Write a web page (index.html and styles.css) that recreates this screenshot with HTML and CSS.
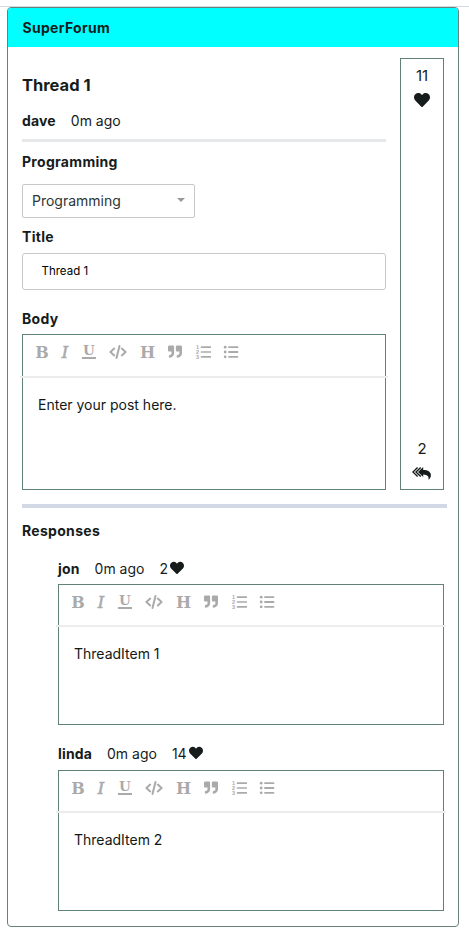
FILE: index.html
```html
<!DOCTYPE html>
<html lang="en">
<head>
<meta charset="utf-8">
<title>SuperForum</title>
<link rel="stylesheet" href="styles.css">
</head>
<body>
<svg class="sprite" aria-hidden="true">
  <symbol id="heart" viewBox="0 0 512 512"><path d="M462.3 62.6C407.5 15.9 326 24.3 275.7 76.2L256 96.5l-19.7-20.3C186.1 24.3 104.5 15.9 49.7 62.6c-62.8 53.6-66.1 149.8-9.9 207.9l193.5 199.8c12.5 12.9 32.8 12.9 45.3 0l193.5-199.8c56.3-58.1 53-154.3-9.8-207.9z"/></symbol>
  <symbol id="code" viewBox="0 0 20 16"><path d="M6.2 4.6 2.4 8l3.8 3.4M13.8 4.6l3.8 3.4-3.8 3.4M11.5 1.9 8.5 14.1" fill="none" stroke="currentColor" stroke-width="2" stroke-linecap="round" stroke-linejoin="round"/></symbol>
  <symbol id="quote" viewBox="0 0 512 512"><path d="M464 32H336c-26.5 0-48 21.5-48 48v128c0 26.5 21.5 48 48 48h80v64c0 35.3-28.7 64-64 64h-8c-13.3 0-24 10.7-24 24v48c0 13.3 10.7 24 24 24h8c88.4 0 160-71.6 160-160V80c0-26.5-21.5-48-48-48zm-288 0H48C21.5 32 0 53.5 0 80v128c0 26.5 21.5 48 48 48h80v64c0 35.3-28.7 64-64 64h-8c-13.3 0-24 10.7-24 24v48c0 13.3 10.7 24 24 24h8c88.4 0 160-71.6 160-160V80c0-26.5-21.5-48-48-48z"/></symbol>
  <symbol id="ul" viewBox="0 0 16 16"><path d="M6 3.2h8.5M6 8h8.5M6 12.8h8.5" stroke="currentColor" stroke-width="1.8" stroke-linecap="round"/><circle cx="2.2" cy="3.2" r="1.4"/><circle cx="2.2" cy="8" r="1.4"/><circle cx="2.2" cy="12.8" r="1.4"/></symbol>
  <symbol id="replies" viewBox="0 0 20 16"><path d="M5.6 2.5.9 7l4.7 4.5M8.700 2.500 4 7l4.700 4.500" fill="none" stroke="currentColor" stroke-width="1.4"/><path d="M6 7l5.200-5v2.900c4.800 0 7.700 1.900 7.700 5.300 0 1.900-.9 3.500-2.400 4.600.6-3.200-.8-5.300-5.300-5.400V12z"/></symbol>
</svg>
<div class="rule"></div>
<main class="card">
  <header class="header">SuperForum</header>
  <div class="content">
    <section class="thread">
      <div class="post">
        <h1>Thread 1</h1>
        <p class="meta"><strong>dave</strong><span>0m ago</span></p>
        <hr class="thin">
        <h2 class="category">Programming</h2>
        <div class="select"><span>Programming</span><i class="arrow"></i></div>
        <h2 class="title-label">Title</h2>
        <div class="input">Thread 1</div>
        <h2 class="body-label">Body</h2>
        <div class="editor tall">
          <div class="toolbar"><span class="b">B</span><span class="i">I</span><span class="u">U</span><svg class="wide"><use href="#code"/></svg><span class="h">H</span><svg class="q"><use href="#quote"/></svg><svg class="ol" viewBox="0 0 16 16"><path d="M6.5 3.2h9M6.5 8h9M6.5 12.8h9"/><text x="1" y="5.2">1</text><text x="1" y="10">2</text><text x="1" y="14.8">3</text></svg><svg><use href="#ul"/></svg></div>
          <p>Enter your post here.</p>
        </div>
      </div>
      <aside class="points">
        <div class="stat"><span>11</span><svg class="heart"><use href="#heart"/></svg></div>
        <div class="stat"><span>2</span><svg class="replies"><use href="#replies"/></svg></div>
      </aside>
    </section>
    <hr class="thick">
    <h2 class="responses">Responses</h2>
    <article class="response">
      <p class="meta"><strong>jon</strong><span>0m ago</span><span class="likes">2<svg><use href="#heart"/></svg></span></p>
      <div class="editor">
        <div class="toolbar"><span class="b">B</span><span class="i">I</span><span class="u">U</span><svg class="wide"><use href="#code"/></svg><span class="h">H</span><svg class="q"><use href="#quote"/></svg><svg class="ol" viewBox="0 0 16 16"><path d="M6.5 3.2h9M6.5 8h9M6.5 12.8h9"/><text x="1" y="5.2">1</text><text x="1" y="10">2</text><text x="1" y="14.8">3</text></svg><svg><use href="#ul"/></svg></div>
        <p>ThreadItem 1</p>
      </div>
    </article>
    <article class="response">
      <p class="meta"><strong>linda</strong><span>0m ago</span><span class="likes">14<svg><use href="#heart"/></svg></span></p>
      <div class="editor">
        <div class="toolbar"><span class="b">B</span><span class="i">I</span><span class="u">U</span><svg class="wide"><use href="#code"/></svg><span class="h">H</span><svg class="q"><use href="#quote"/></svg><svg class="ol" viewBox="0 0 16 16"><path d="M6.5 3.2h9M6.5 8h9M6.5 12.8h9"/><text x="1" y="5.2">1</text><text x="1" y="10">2</text><text x="1" y="14.8">3</text></svg><svg><use href="#ul"/></svg></div>
        <p>ThreadItem 2</p>
      </div>
    </article>
  </div>
</main>
</body>
</html>
```
FILE: styles.css
```css
* { box-sizing: border-box; margin: 0; padding: 0; }
body { background: #fff; color: #161c1c; font: 14px/20px Inter, "Liberation Sans", sans-serif; padding-top: 6px; }
svg { display: block; fill: currentColor; flex: none; }
.sprite { position: absolute; width: 0; height: 0; }
.rule { height: 1px; background: #d3dae3; }
.card { width: 452px; height: 920px; margin-left: 7px; border: 1px solid #67807b; border-radius: 4px; overflow: hidden; }
.header { height: 39px; padding-left: 14.5px; line-height: 40px; font-weight: 700; letter-spacing: .3px; background: #0ff; }
.content { padding: 11px 14px 0; }
.thread { display: flex; gap: 14px; height: 432px; }
.post { width: 364px; display: flex; flex-direction: column; }
h1 { font-size: 16.5px; line-height: 22px; margin-top: 16px; font-weight: 700; }
h2 { font-size: 14px; line-height: 20px; font-weight: 700; letter-spacing: .3px; }
strong { font-weight: 700; letter-spacing: .15px; }
.meta { display: flex; gap: 15px; height: 20px; }
.post .meta { margin-top: 15px; }
hr { border: 0; flex: none; }
.thin { height: 3px; margin-top: 8px; background: #e6e8ea; }
.category { margin-top: 10px; }
.select { display: flex; align-items: center; justify-content: space-between; width: 173px; height: 34px; margin-top: 12px; padding: 0 9px; border: 1px solid #c6c9c9; border-radius: 2px; color: #2c3636; }
.arrow { border: 4.5px solid transparent; border-top-color: #999; border-bottom: 0; margin-top: -3px; }
.title-label { margin-top: 9px; }
.input { height: 37px; margin-top: 6px; padding-left: 18.5px; border: 1px solid #c6c9c9; border-radius: 3px; font-size: 11.5px; line-height: 34px; color: #000; }
.body-label { margin-top: 19px; }
.editor { height: 141px; border: 1px solid #608078; }
.tall { height: 156px; margin-top: 5px; }
.toolbar { display: flex; gap: 12px; height: 42px; margin: 0 -3px; padding: 9px 0 0 16px; border-bottom: 2px solid #ececec; color: #aaa; }
.tall .toolbar { height: 43px; }
.toolbar svg { width: 16px; height: 16px; }
.response .toolbar { padding-top: 8.5px; }
.toolbar svg.wide { width: 20px; }
.toolbar svg.q { height: 15px; padding: .5px; }
.toolbar .ol path { stroke: currentColor; stroke-width: 1.7; stroke-linecap: round; }
.toolbar .ol text { font: 700 5.5px "Liberation Sans", sans-serif; }
.toolbar span { flex: none; height: 16px; font: 700 16px/17px "DejaVu Serif", serif; display: flex; justify-content: center; }
.toolbar .b { width: 12px; }
.toolbar .i { width: 10px; font-style: italic; font-weight: 400; -webkit-text-stroke: .6px #aaa; }
.toolbar .u { width: 14px; height: 15px; font-size: 13.5px; line-height: 13px; border-bottom: 2px solid #aaa; }
.toolbar .h { width: 15px; }
.editor p { padding: 17px 15px 0; color: #111818; }
.points { width: 44px; border: 1px solid #608078; display: flex; flex-direction: column; justify-content: space-between; padding: 7px 0 8px; }
.stat { display: flex; flex-direction: column; align-items: center; font-size: 15px; line-height: 20px; }
.heart { width: 16px; height: 16px; margin-top: 6px; }
.replies { width: 20px; height: 16px; margin-top: 6px; }
.thick { width: 425px; height: 4px; margin-top: 14px; background: #d3d9e4; }
.responses { margin-top: 13px; }
.response { margin: 18px 0 0 36px; width: 386px; }
.response + .response { margin-top: 19px; }
.response .editor { margin-top: 5px; }
.response + .response .editor { margin-top: 6px; }
.likes { display: flex; gap: 2px; }
.likes svg { width: 14px; height: 14px; margin-top: 2px; }
```
